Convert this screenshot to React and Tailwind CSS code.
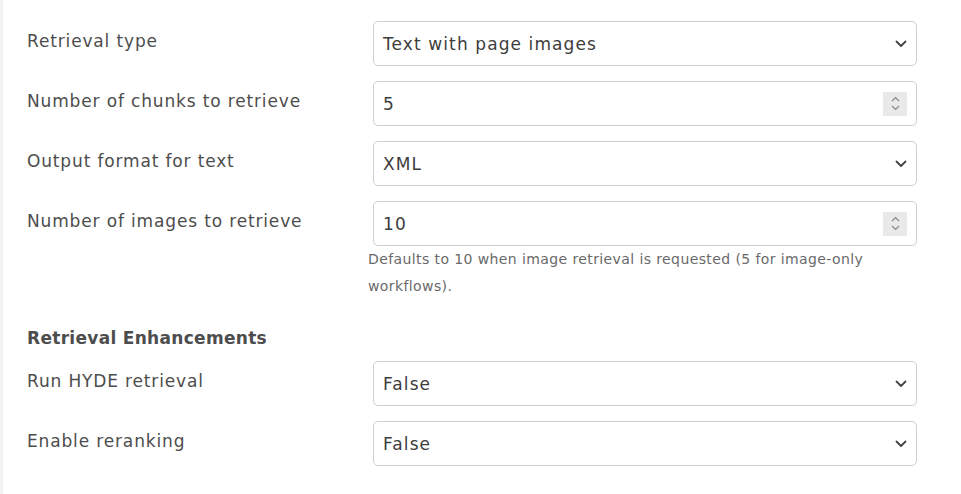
import React from "react";

const font = { fontFamily: "'DejaVu Sans', 'Noto Sans', sans-serif" };

function Chevron() {
  return (
    <svg width="12" height="8" viewBox="0 0 12 8" className="shrink-0">
      <path d="M1.5 1.5 L6 6 L10.5 1.5" fill="none" stroke="#444" strokeWidth="1.8" strokeLinecap="round" strokeLinejoin="round" />
    </svg>
  );
}

function Spinner() {
  return (
    <div className="w-[24px] h-[24px] bg-[#e9e9e9] flex flex-col items-center justify-center gap-[3px]">
      <svg width="9" height="6" viewBox="0 0 9 6"><path d="M1 5 L4.5 1.5 L8 5" fill="none" stroke="#888" strokeWidth="1.2" /></svg>
      <svg width="9" height="6" viewBox="0 0 9 6"><path d="M1 1 L4.5 4.5 L8 1" fill="none" stroke="#888" strokeWidth="1.2" /></svg>
    </div>
  );
}

function Row({ label, value, kind = "select", help }) {
  return (
    <div className="flex items-start">
      <div className="w-[346px] pt-[8px] text-[17px] tracking-[0.85px] leading-[24px] text-[#4d4d4d]">{label}</div>
      <div className="w-[544px] flex flex-col">
        <div className="h-[45px] border border-[#cfcfcf] rounded-[5px] bg-white flex items-center justify-between pl-[9px] pr-[9px]">
          <span className="text-[17px] tracking-[1.1px] text-[#3d3d3d] pt-[2px]">{value}</span>
          {kind === "select" ? <Chevron /> : <Spinner />}
        </div>
        {help && (
          <div className="ml-[-5px] mt-0 text-[14px] tracking-[0.4px] leading-[27px] text-[#6a6a6a] pr-[40px]">{help}</div>
        )}
      </div>
    </div>
  );
}

export default function App() {
  return (
    <div style={font} className="w-[961px] h-[494px] overflow-hidden bg-white border-l-[3px] border-[#f3f3f3]">
      <div className="pl-[24px] pt-[21px] flex flex-col gap-[15px]">
        <Row label="Retrieval type" value="Text with page images" />
        <Row label="Number of chunks to retrieve" value="5" kind="number" />
        <Row label="Output format for text" value="XML" />
        <Row
          label="Number of images to retrieve"
          value="10"
          kind="number"
          help="Defaults to 10 when image retrieval is requested (5 for image-only workflows)."
        />
      </div>
      <div className="pl-[24px] mt-[26px] text-[17px] tracking-[0.3px] font-bold text-[#4d4d4d] leading-[24px]">Retrieval Enhancements</div>
      <div className="pl-[24px] mt-[11px] flex flex-col gap-[15px]">
        <Row label="Run HYDE retrieval" value="False" />
        <Row label="Enable reranking" value="False" />
      </div>
      <div className="pl-[24px] mt-[25px] text-[17px] tracking-[0.85px] leading-[24px] text-[#4d4d4d]">Number of reranked chunks</div>
    </div>
  );
}
